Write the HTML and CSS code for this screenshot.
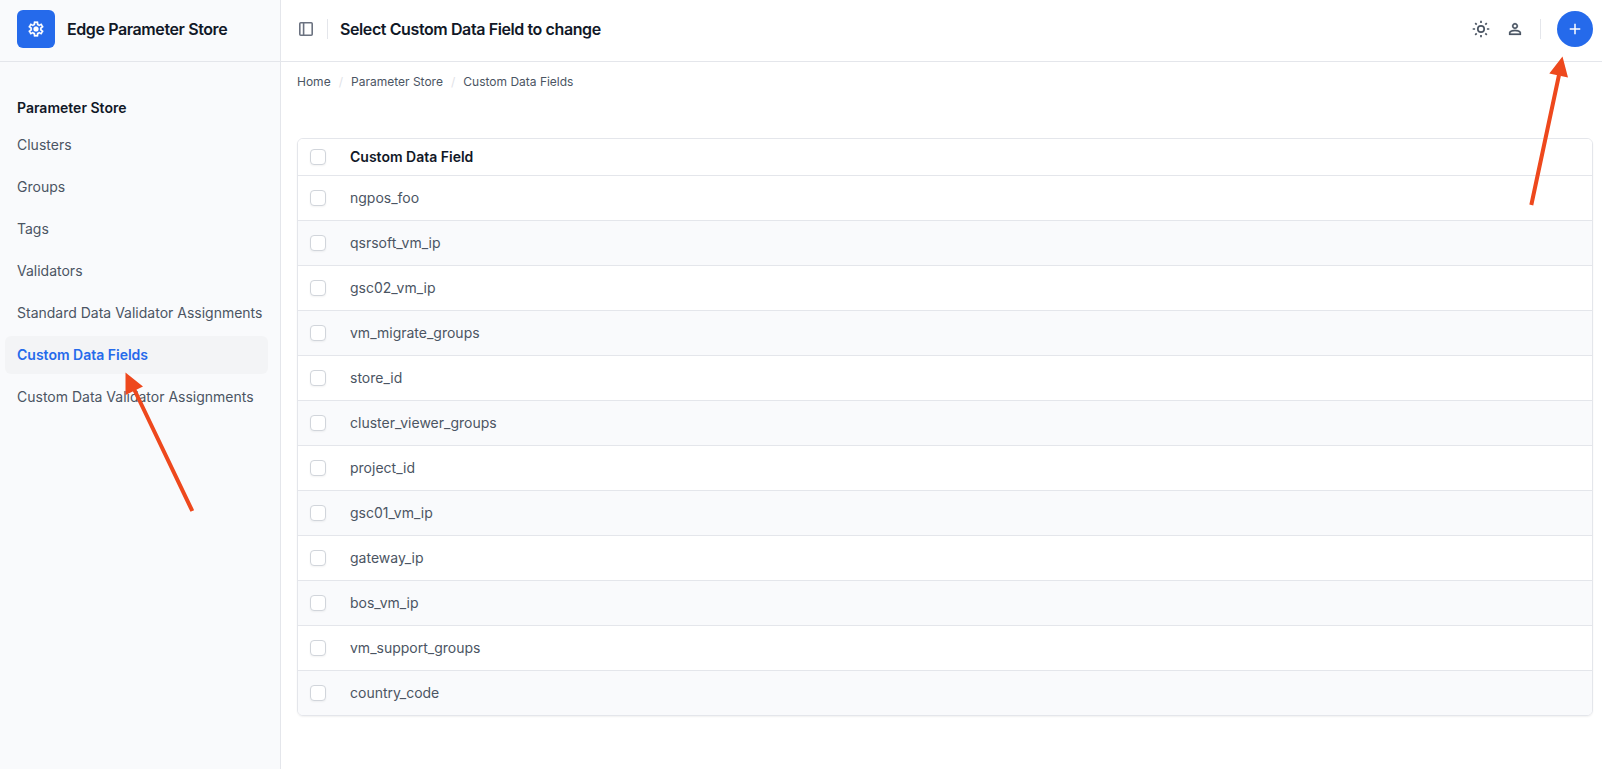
FILE: index.html
```html
<!DOCTYPE html>
<html lang="en">
<head>
<meta charset="utf-8">
<title>Select Custom Data Field to change</title>
<link rel="stylesheet" href="styles.css">
</head>
<body>
<div class="app">
  <aside class="sidebar">
    <div class="brand">
      <span class="brand-logo"><svg width="18" height="18" viewBox="0 -960 960 960" fill="currentColor" stroke="currentColor" stroke-width="14"><path d="m370-80-16-128q-13-5-24.500-12T307-235l-119 50L78-375l103-78q-1-7-1-13.500v-27q0-6.500 1-13.500L78-585l110-190 119 50q11-8 23-15t24-12l16-128h220l16 128q13 5 24.500 12t22.500 15l119-50 110 190-103 78q1 7 1 13.500v27q0 6.500-2 13.500l103 78-110 190-118-50q-11 8-23 15t-24 12L590-80H370Zm70-80h79l14-106q31-8 57.500-23.500T639-327l99 41 39-68-86-65q5-14 7-29.500t2-31.500q0-16-2-31.500t-7-29.500l86-65-39-68-99 42q-22-23-48.500-38.500T533-694l-13-106h-79l-14 106q-31 8-57.500 23.500T321-633l-99-41-39 68 86 64q-5 15-7 30t-2 32q0 16 2 31t7 30l-86 65 39 68 99-42q22 23 48.500 38.500T427-266l13 106Z"/><circle cx="480" cy="-480" r="134"/></svg></span>
      <span class="brand-name">Edge Parameter Store</span>
    </div>
    <nav class="nav">
      <h2 class="nav-title">Parameter Store</h2>
      <a class="nav-item">Clusters</a>
      <a class="nav-item">Groups</a>
      <a class="nav-item">Tags</a>
      <a class="nav-item">Validators</a>
      <a class="nav-item">Standard Data Validator Assignments</a>
      <a class="nav-item active">Custom Data Fields</a>
      <a class="nav-item">Custom Data Validator Assignments</a>
    </nav>
  </aside>
  <main class="main">
    <header class="topbar">
      <svg class="panel-icon" width="14" height="14" viewBox="0 0 14 14" fill="none" stroke="currentColor" stroke-width="1.600"><rect x=".8" y=".8" width="12.400" height="12.400" rx="1"/><path d="M4.600 1v12"/></svg>
      <span class="divider"></span>
      <h1 class="page-title">Select Custom Data Field to change</h1>
      <div class="actions">
        <svg class="sun" width="18" height="18" viewBox="0 0 18 18" fill="none" stroke="currentColor" stroke-width="1.700"><circle cx="9" cy="9" r="3.200"/><path d="M9 .7v2.400M9 14.900v2.400M.7 9h2.400M14.900 9h2.400M3.200 3.200l1.500 1.500M13.300 13.300l1.500 1.500M3.200 14.800l1.500-1.500M13.300 4.700l1.500-1.500"/></svg>
        <svg width="18" height="18" viewBox="0 -960 960 960" fill="currentColor" stroke="currentColor" stroke-width="12"><path d="M480-480q-66 0-113-47t-47-113q0-66 47-113t113-47q66 0 113 47t47 113q0 66-47 113t-113 47ZM160-160v-112q0-34 17.500-62.500T224-378q62-31 126-46.500T480-440q66 0 130 15.500T736-378q29 15 46.500 43.500T800-272v112H160Zm80-80h480v-32q0-11-5.500-20T700-306q-54-27-109-40.500T480-360q-56 0-111 13.500T260-306q-9 5-14.500 14t-5.500 20v32Zm240-320q33 0 56.500-23.500T560-640q0-33-23.500-56.500T480-720q-33 0-56.500 23.500T400-640q0 33 23.500 56.500T480-560Z"/></svg>
        <span class="divider"></span>
        <a class="add"><svg width="18" height="18" viewBox="0 -960 960 960" fill="currentColor"><path d="M440-440H200v-80h240v-240h80v240h240v80H520v240h-80v-240Z"/></svg></a>
      </div>
    </header>
    <div class="crumbs"><span>Home</span><i>/</i><span>Parameter Store</span><i>/</i><span>Custom Data Fields</span></div>
    <div class="table">
      <div class="row head"><span class="check"></span><span>Custom Data Field</span></div>
      <div class="row"><span class="check"></span><span>ngpos_foo</span></div>
      <div class="row"><span class="check"></span><span>qsrsoft_vm_ip</span></div>
      <div class="row"><span class="check"></span><span>gsc02_vm_ip</span></div>
      <div class="row"><span class="check"></span><span>vm_migrate_groups</span></div>
      <div class="row"><span class="check"></span><span>store_id</span></div>
      <div class="row"><span class="check"></span><span>cluster_viewer_groups</span></div>
      <div class="row"><span class="check"></span><span>project_id</span></div>
      <div class="row"><span class="check"></span><span>gsc01_vm_ip</span></div>
      <div class="row"><span class="check"></span><span>gateway_ip</span></div>
      <div class="row"><span class="check"></span><span>bos_vm_ip</span></div>
      <div class="row"><span class="check"></span><span>vm_support_groups</span></div>
      <div class="row"><span class="check"></span><span>country_code</span></div>
    </div>
  </main>
</div>
<svg class="arrows" width="1602" height="769" viewBox="0 0 1602 769" fill="#ee481d" stroke="#ee481d">
  <path d="M192.300 511L134 389M1531.300 205L1559 75" fill="none" stroke-width="4"/>
  <path d="M125.500 372.500L143 386.500L125.500 395ZM1562.500 56.500L1568 77.500L1549.300 73.500Z" stroke="none"/>
</svg>
</body>
</html>
```
FILE: styles.css
```css
* { box-sizing: border-box; }
body {
  margin: 0;
  background: #fff;
  color: #4b5563;
  font-family: Inter, "Liberation Sans", sans-serif;
  font-size: 14px;
  line-height: 20px;
}
svg { display: block; flex: none; }
.app { display: flex; height: 769px; overflow: hidden; }
.sidebar {
  width: 281px;
  flex: none;
  background: #f9fafc;
  border-right: 1px solid #e4e6eb;
}
.brand {
  display: flex;
  align-items: center;
  gap: 12px;
  height: 62px;
  padding: 0 17px 4px;
  border-bottom: 1px solid #e4e6eb;
}
.brand-logo {
  display: grid;
  place-items: center;
  width: 38px;
  height: 38px;
  border-radius: 6px;
  background: #256aeb;
  color: #fff;
}
.brand-name, .page-title {
  margin: 0;
  color: #111827;
  font-size: 16px;
  font-weight: 600;
  letter-spacing: -.4px;
  white-space: nowrap;
}
.nav {
  display: flex;
  flex-direction: column;
  gap: 4px;
  padding: 36px 12px 0 5px;
}
.nav-title {
  margin: 0 0 4px;
  padding-left: 12px;
  color: #111827;
  font-size: 14px;
  font-weight: 600;
}
.nav-item {
  height: 38px;
  padding: 9px 0 9px 12px;
  border-radius: 6px;
  white-space: nowrap;
}
.nav-item.active { background: #f3f4f6; color: #256aeb; font-weight: 600; }
.main { flex: 1; min-width: 0; }
.topbar {
  display: flex;
  align-items: center;
  height: 62px;
  padding: 0 9px 4px 18px;
  border-bottom: 1px solid #e4e6eb;
}
.panel-icon { color: #6b7280; }
.divider { width: 1px; height: 20px; background: #e4e6eb; }
.topbar > .divider { margin: 0 12px 0 14px; }
.actions { display: flex; align-items: center; margin-left: auto; }
.sun { margin-right: 16px; }
.actions .divider { margin: 0 16px; }
.add {
  display: grid;
  place-items: center;
  width: 36px;
  height: 36px;
  border-radius: 50%;
  background: #256aeb;
  color: #fff;
}
.crumbs {
  display: flex;
  margin: 10px 0 46px 16px;
  font-size: 12px;
}
.crumbs i { width: 20.4px; text-align: center; color: #dfe2e7; font-style: normal; }
.table {
  margin: 0 9px 0 16px;
  border: 1px solid #e4e6eb;
  border-radius: 6px;
  overflow: hidden;
  box-shadow: 0 1px 2px rgba(0, 0, 0, .06);
}
.row {
  display: flex;
  align-items: center;
  gap: 24px;
  height: 45px;
  padding-left: 12px;
  border-top: 1px solid #e4e6eb;
}
.row:nth-child(odd) { background: #f9fafc; }
.row.head {
  height: 36px;
  border-top: 0;
  background: #fff;
  color: #111827;
  font-weight: 600;
}
.check {
  width: 16px;
  height: 16px;
  border: 1px solid #d1d5db;
  border-radius: 4px;
  background: #fff;
  box-shadow: 0 1px 2px rgba(0, 0, 0, .05);
}
.arrows { position: absolute; top: 0; left: 0; pointer-events: none; }
```
